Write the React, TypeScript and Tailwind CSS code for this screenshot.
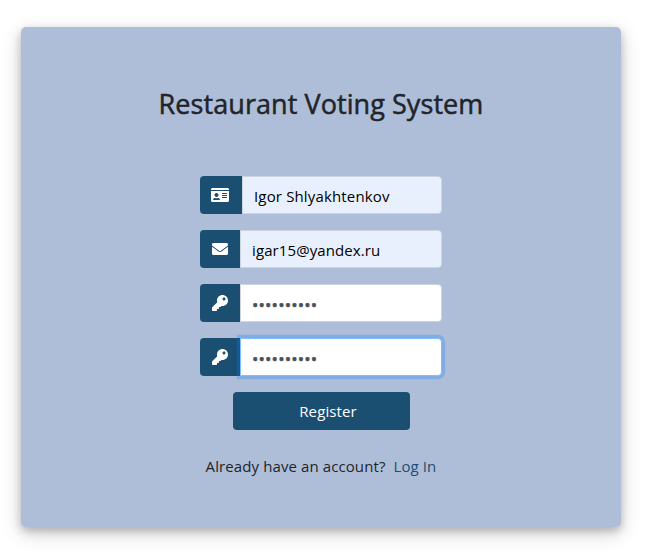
import type { ReactNode } from "react";
import { FaEnvelope, FaIdCard, FaKey } from "react-icons/fa";

type FieldProps = {
  icon: ReactNode;
  iconWidth?: string;
  filled?: boolean;
  focused?: boolean;
  children: ReactNode;
};

function Field({ icon, iconWidth = "w-10", filled, focused, children }: FieldProps) {
  return (
    <div className="flex h-[38px] w-[242px]">
      <div className={`flex ${iconWidth} shrink-0 items-center justify-center rounded-l bg-[#1b4f72] text-base text-white`}>
        {icon}
      </div>
      <div
        className={`relative flex flex-1 items-center rounded-r border pl-3 whitespace-nowrap ${
          filled ? "bg-[#e8f0fe]" : "bg-white"
        } ${focused ? "border-[#80bdff] shadow-[0_0_0_3.2px_rgba(0,123,255,0.25)]" : "border-[#ced4da]"}`}
      >
        {children}
      </div>
    </div>
  );
}

function Dots() {
  return (
    <span className="-ml-px pt-[3px] text-[17px] leading-none tracking-[0.15px] text-[#495057] [-webkit-text-stroke:0.5px_#495057]">
      ••••••••••
    </span>
  );
}

export default function App() {
  return (
    <main className="h-[552px] overflow-hidden bg-white pt-[27px] pl-[21px] font-['Open_Sans','Noto_Sans',sans-serif] text-base text-[#212529]">
      <section className="flex h-[500px] w-[600px] flex-col items-center rounded-[5px] bg-[#afbed8] pt-[60px] shadow-[0_4px_8px_0_rgba(0,0,0,0.2),0_6px_20px_0_rgba(0,0,0,0.19)]">
        <h1 className="h-[34px] text-[27px] leading-[34px] font-normal tracking-[0.07px] whitespace-nowrap [-webkit-text-stroke:0.5px_#212529]">
          Restaurant Voting System
        </h1>
        <form className="mt-[55px] flex flex-col items-center gap-4">
          <Field icon={<FaIdCard className="mr-0.5 h-4 w-[18px]" />} iconWidth="w-[42px]" filled>
            <span className="-ml-px pt-0.5 text-[15px] tracking-[0.15px] text-black">Igor Shlyakhtenkov</span>
          </Field>
          <Field icon={<FaEnvelope />} filled>
            <span className="-ml-px pt-0.5 text-[15px] tracking-[0.1px] text-black">igar15@yandex.ru</span>
          </Field>
          <Field icon={<FaKey />}>
            <Dots />
          </Field>
          <Field icon={<FaKey />} focused>
            <Dots />
          </Field>
          <button type="button" className="h-[38px] w-[177px] rounded bg-[#1b4f72] pl-3.5 text-[15px] tracking-[0.1px] text-white">
            Register
          </button>
        </form>
        <p className="mt-6 flex gap-2 text-[15px] leading-6 tracking-[0.1px] whitespace-nowrap">
          <span>Already have an account?</span>
          <a className="text-[#1b4f72]">Log In</a>
        </p>
      </section>
    </main>
  );
}
